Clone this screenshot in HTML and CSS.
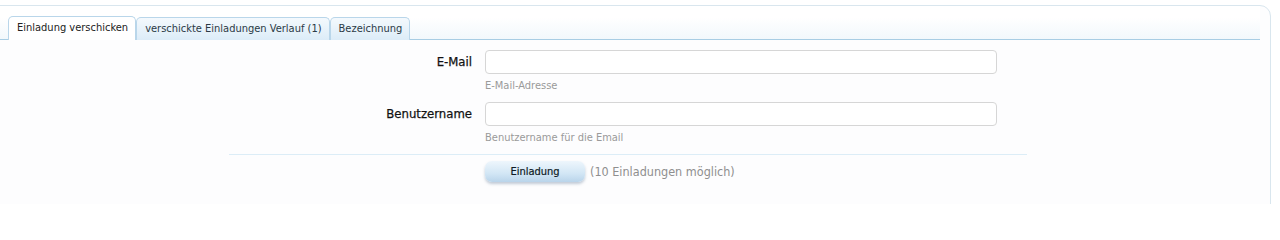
FILE: index.html
```html
<!DOCTYPE html>
<html lang="de">
<head>
<meta charset="utf-8">
<title>Einladung verschicken</title>
<link rel="stylesheet" href="styles.css">
</head>
<body>
<div class="panel">
  <ul class="tabs">
    <li class="tab active">Einladung verschicken</li>
    <li class="tab">verschickte Einladungen Verlauf (1)</li>
    <li class="tab">Bezeichnung</li>
  </ul>
  <form class="form">
    <div class="row">
      <label class="label" for="email">E-Mail</label>
      <div class="field">
        <input class="input" id="email" type="text">
        <div class="hint">E-Mail-Adresse</div>
      </div>
    </div>
    <div class="row">
      <label class="label" for="user">Benutzername</label>
      <div class="field">
        <input class="input" id="user" type="text">
        <div class="hint">Benutzername für die Email</div>
      </div>
    </div>
    <div class="submit">
      <div class="label"></div>
      <div class="field actions">
        <button class="button" type="button">Einladung</button>
        <span class="note">(10 Einladungen möglich)</span>
      </div>
    </div>
  </form>
</div>
</body>
</html>
```
FILE: styles.css
```css
html, body {
  margin: 0;
  padding: 0;
  background: #ffffff;
  font-family: "DejaVu Sans Condensed", "DejaVu Sans", sans-serif;
  color: #141414;
}
body {
  height: 204px;
  overflow: hidden;
}
.panel {
  margin: 5px 9px 0 -10px;
  height: 230px;
  border: 1px solid #d9e6ee;
  border-radius: 0 11px 0 0;
  background: #fdfdfe;
  padding: 0 10px 0 19px;
  box-sizing: border-box;
}
.tabs {
  list-style: none;
  margin: 0 0 0 -19px;
  padding: 10px 0 0 17px;
  display: flex;
  align-items: flex-end;
  border-bottom: 1px solid #a8cde4;
  background: linear-gradient(to bottom, #ffffff 0%, #ffffff 35%, #f2f8fc 100%);
  height: 23px;
  box-sizing: content-box;
}
.tab {
  height: 22px;
  line-height: 22px;
  padding: 0 7px 0 8px;
  font-size: 11px;
  color: #2b3a46;
  border: 1px solid #b9d6ea;
  border-bottom: none;
  border-radius: 5px 5px 0 0;
  background: linear-gradient(to bottom, #f4f9fd 0%, #dcecf8 100%);
  margin-right: 0;
  position: relative;
  top: 1px;
}
.tab.active {
  background: #ffffff;
  height: 23px;
  color: #222;
}
.form {
  padding-top: 10px;
}
.row {
  display: flex;
  align-items: flex-start;
  margin-bottom: 10px;
}
.label {
  width: 475px;
  flex: none;
  text-align: right;
  padding-right: 13px;
  box-sizing: border-box;
  font-size: 13px;
  font-weight: normal;
  color: #111;
  line-height: 24px;
  -webkit-text-stroke: 0.25px #111;
}
.field {
  display: flex;
  flex-direction: column;
}
.input {
  width: 512px;
  height: 24px;
  box-sizing: border-box;
  border: 1px solid #d6d6d6;
  border-radius: 4px;
  background: #ffffff;
  margin: 0;
}
.hint {
  font-size: 11px;
  color: #9a9a9a;
  margin-top: 5px;
  line-height: 13px;
}
.submit {
  display: flex;
  margin: 10px 233px 0 219px;
  border-top: 1px solid #dcedf7;
  padding-top: 6px;
}
.submit .label {
  width: 256px;
}
.actions {
  flex-direction: row;
  align-items: center;
}
.button {
  width: 100px;
  height: 21px;
  border: none;
  border-radius: 7px;
  background: linear-gradient(to bottom, #eef6fc 0%, #d2e6f5 60%, #b9d4ea 100%);
  box-shadow: 0 2px 3px rgba(80, 110, 140, 0.35);
  font-family: "DejaVu Sans Condensed", "DejaVu Sans", sans-serif;
  font-size: 11px;
  color: #0e1a24;
  -webkit-text-stroke: 0.2px #0e1a24;
  padding: 0;
}
.note {
  margin-left: 5px;
  font-size: 12.5px;
  color: #8f8f8f;
}
```
